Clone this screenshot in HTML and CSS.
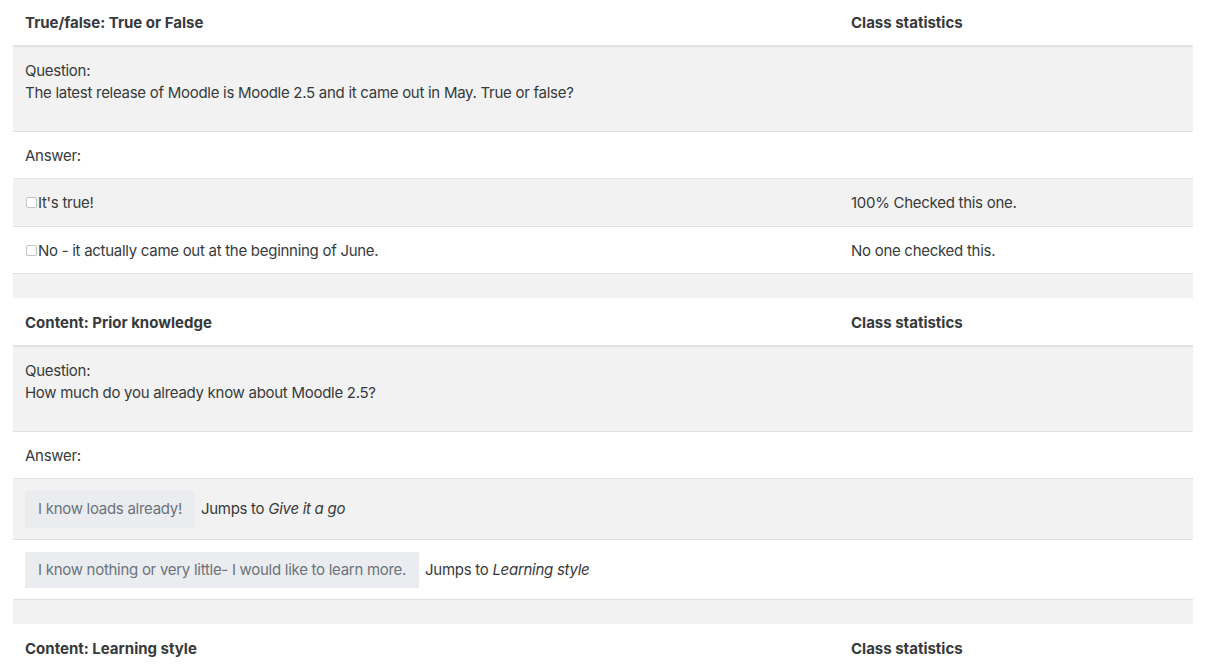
FILE: index.html
```html
<!DOCTYPE html>
<html lang="en">
    <head>
        <meta charset="utf-8" />
        <meta name="viewport" content="width=device-width, initial-scale=1" />
        <title>Lesson report</title>
        <link rel="stylesheet" href="styles.css">
    </head>
    <body>
        <main class="report">
            <!-- pagina 1 -->
            <table class="pagetable">
                <thead>
                    <tr><th class="c0">True/false: True or False</th><th class="c1">Class statistics</th></tr>
                </thead>
                <tbody>
                    <tr class="odd"><td class="c0"><div class="question">Question:<br>The latest release of Moodle is Moodle 2.5 and it came out in May. True or false?</div></td><td class="c1"></td></tr>
                    <tr><td class="c0">Answer:</td><td class="c1"></td></tr>
                    <tr class="odd"><td class="c0"><span class="check"></span>It's true!</td><td class="c1">100% Checked this one.</td></tr>
                    <tr><td class="c0"><span class="check"></span>No - it actually came out at the beginning of June.</td><td class="c1">No one checked this.</td></tr>
                    <tr class="odd"><td class="c0"></td><td class="c1"></td></tr>
                </tbody>
            </table>
            <!-- pagina 2 -->
            <table class="pagetable">
                <thead>
                    <tr><th class="c0">Content: Prior knowledge</th><th class="c1">Class statistics</th></tr>
                </thead>
                <tbody>
                    <tr class="odd"><td class="c0"><div class="question">Question:<br>How much do you already know about Moodle 2.5?</div></td><td class="c1"></td></tr>
                    <tr><td class="c0">Answer:</td><td class="c1"></td></tr>
                    <tr class="odd"><td class="c0"><span class="btn">I know loads already!</span> Jumps to <em>Give it a go</em></td><td class="c1"></td></tr>
                    <tr><td class="c0"><span class="btn">I know nothing or very little- I would like to learn more.</span> Jumps to <em>Learning style</em></td><td class="c1"></td></tr>
                    <tr class="odd"><td class="c0"></td><td class="c1"></td></tr>
                </tbody>
            </table>
            <!-- pagina 3 -->
            <table class="pagetable">
                <thead>
                    <tr><th class="c0">Content: Learning style</th><th class="c1">Class statistics</th></tr>
                </thead>
            </table>
        </main>
    </body>
</html>
```

FILE: styles.css
```css
*{ box-sizing: border-box; }
body{ margin: 0; 
    font-family: Inter, Roboto, "Liberation Sans", sans-serif; 
    font-size: 15px; 
    line-height: 1.5; 
    color: #373a3c; 
    background-color: #fff; }
.report{ padding: 0 14px 0 13px; margin-top: -2px; }

.pagetable{ width: 100%; border-collapse: collapse; }
.pagetable th, .pagetable td{ padding: 13px 12px 11px; text-align: left; vertical-align: top; border-top: 1px solid #dee2e6; }
.pagetable td{ letter-spacing: -0.28px; }
.pagetable thead th{ font-weight: bold; padding-top: 14px; padding-bottom: 10px; border-top: 0; border-bottom: 2px solid #dee2e6; }
.pagetable .c0{ width: 70%; }
.pagetable tr.odd{ background-color: #f2f2f2; }

.question{ margin-bottom: 15px; }
.check{ display: inline-block; width: 11px; height: 11px; margin: -2px 1px 0 1px; 
    border: 1px solid #c4c4c4; border-radius: 2px; background: #fff; vertical-align: middle; }

.btn{ display: inline-block; padding: 6px 12px; margin: -1px 2px 0 0; 
    border: 1px solid #eaecef; background-color: #eaecef; color: #6a737b; }
```
